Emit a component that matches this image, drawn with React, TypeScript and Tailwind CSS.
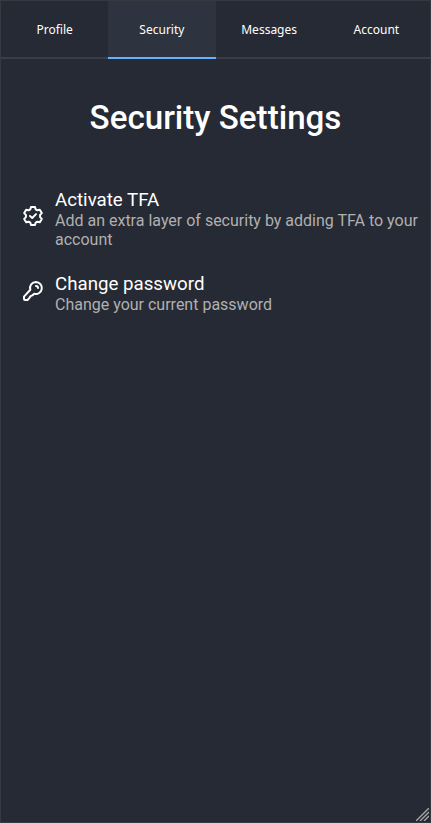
import React from "react";

const tabs = ["Profile", "Security", "Messages", "Account"];

function BadgeIcon() {
  return (
    <svg className="mb-[6px] size-6 shrink-0" viewBox="0 0 24 24" fill="none" stroke="currentColor" strokeWidth="2" strokeLinecap="round" strokeLinejoin="round">
      <path d="M10 3h4l.7 2.400 1.600.9 2.500-.6 2 3.400-1.700 1.800v2.200l1.700 1.800-2 3.400-2.500-.6-1.600.9L14 21h-4l-.7-2.400-1.600-.9-2.500.6-2-3.400 1.700-1.800v-2.200L3.200 9.100l2-3.400 2.500.6 1.600-.9z" />
      <path d="m9 12 2.200 2 3.800-3.900" />
    </svg>
  );
}

function KeyIcon() {
  return (
    <svg className="mb-[6px] size-6 shrink-0" viewBox="0 0 24 24" fill="none" stroke="currentColor" strokeWidth="2" strokeLinecap="round" strokeLinejoin="round">
      <path d="M15 3a6 6 0 1 1-1.700 11.800L11.300 16.400 9.600 17.100 8.200 19.100 6.500 21H4a1 1 0 0 1-1-1v-2.400L9.300 10.800A6 6 0 0 1 15 3z" />
      <path d="M15 7a2 2 0 0 1 2 2" />
    </svg>
  );
}

const items = [
  { title: "Activate TFA", text: "Add an extra layer of security by adding TFA to your account", Icon: BadgeIcon },
  { title: "Change password", text: "Change your current password", Icon: KeyIcon },
];

export default function App() {
  return (
    <div className="relative flex h-[823px] w-[431px] flex-col border border-[#36393f] bg-[#262a34] font-['Roboto',sans-serif] text-white">
      <nav className="grid h-[58px] grid-cols-4 font-['Noto_Sans',sans-serif] text-xs">
        {tabs.map((t) => (
          <button
            key={t}
            className={t === "Security" ? "border-b-2 border-[#63b3ff] bg-[#2d333f] pt-0.5" : "border-b-2 border-[#3a3c48] pt-0.5"}
          >
            {t}
          </button>
        ))}
      </nav>
      <h1 className="mt-[39px] text-center text-[33.15px] leading-10 font-medium">Security Settings</h1>
      <ul className="mt-[51px] flex flex-col gap-6 pl-5">
        {items.map(({ title, text, Icon }) => (
          <li key={title} className="flex items-center gap-[10px]">
            <Icon />
            <div>
              <h2 className="text-[18.72px] leading-[22px]">{title}</h2>
              <p className="text-base leading-[19px] text-[#b0b0b0]">{text}</p>
            </div>
          </li>
        ))}
      </ul>
      <svg className="absolute right-px bottom-px size-[13px]" viewBox="0 0 13 13" stroke="#aaa" strokeWidth="1.3" fill="none">
        <path d="M0 13 13 0M4 13 13 4M8 13 13 8" />
      </svg>
    </div>
  );
}
